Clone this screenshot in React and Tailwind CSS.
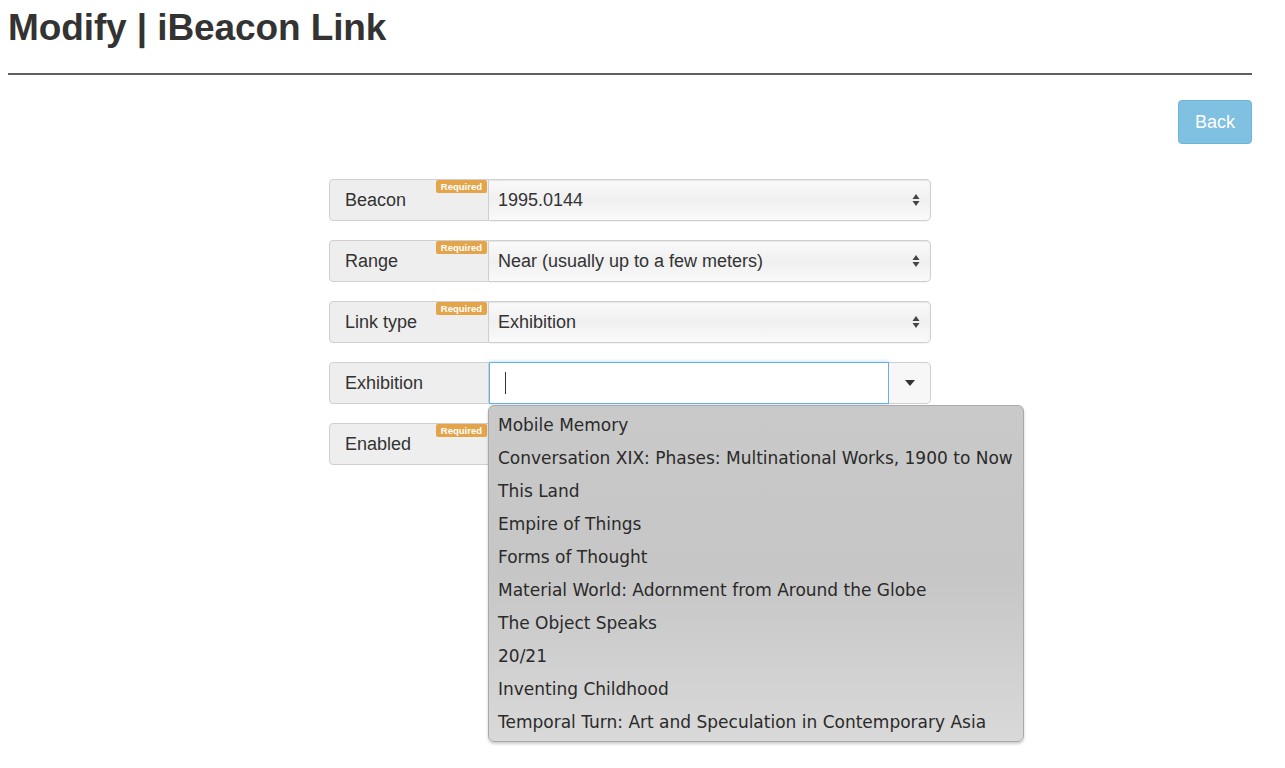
import React from "react";

const exhibitions = [
  "Mobile Memory",
  "Conversation XIX: Phases: Multinational Works, 1900 to Now",
  "This Land",
  "Empire of Things",
  "Forms of Thought",
  "Material World: Adornment from Around the Globe",
  "The Object Speaks",
  "20/21",
  "Inventing Childhood",
  "Temporal Turn: Art and Speculation in Contemporary Asia",
];

function Required() {
  return (
    <span className="absolute right-[1px] top-0 h-[13px] px-[5px] bg-[#e4a54a] text-white text-[9.5px] font-bold leading-[13px] rounded-[2px]">
      Required
    </span>
  );
}

function Label({ text, required }) {
  return (
    <div className="relative w-[160px] h-[42px] shrink-0 bg-[#eeeeee] border border-[#cfcfcf] rounded-l-[4px] flex items-center pl-[15px] text-[18px] text-[#333]">
      {text}
      {required && <Required />}
    </div>
  );
}

function SelectBox({ value }) {
  return (
    <div className="w-[442px] h-[42px] border border-[#cfcfcf] border-l-0 rounded-r-[5px] bg-gradient-to-b from-[#fafafa] via-[#f0f0f0] to-[#fafafa] shadow-[inset_0_1px_1px_rgba(0,0,0,0.08),0_1px_1px_rgba(0,0,0,0.05)] flex items-center pl-[9px] pr-[10px] text-[18px] text-[#333]">
      <span className="flex-1">{value}</span>
      <svg width="8" height="14" viewBox="0 0 8 14">
        <path d="M4 1 L7.5 6 L0.5 6 Z" fill="#444" />
        <path d="M4 13 L7.5 8 L0.5 8 Z" fill="#444" />
      </svg>
    </div>
  );
}

export default function App() {
  return (
    <div className="min-h-[768px] bg-white font-['Liberation_Sans',Arial,sans-serif] text-[#333]">
      <div className="px-[8px]">
        <h1 className="text-[37px] font-bold tracking-[-0.1px] text-[#333] pt-[6px] leading-[44px]">
          Modify | iBeacon Link
        </h1>
        <hr className="mt-[23px] border-0 border-t-[2px] border-[#5f5f5f] mr-[25px]" />
        <div className="flex justify-end mr-[25px] mt-[25px]">
          <button className="w-[74px] h-[44px] rounded-[4px] bg-[#80c0e0] border border-[#6eb3d8] text-white text-[18px]">
            Back
          </button>
        </div>
      </div>

      <div className="ml-[329px] mt-[35px] flex flex-col gap-[19px]">
        <div className="flex">
          <Label text="Beacon" required />
          <SelectBox value="1995.0144" />
        </div>
        <div className="flex">
          <Label text="Range" required />
          <SelectBox value="Near (usually up to a few meters)" />
        </div>
        <div className="flex">
          <Label text="Link type" required />
          <SelectBox value="Exhibition" />
        </div>
        <div className="relative flex">
          <Label text="Exhibition" />
          <div className="w-[400px] h-[42px] border border-[#66afe9] bg-white flex items-center pl-[15px] shadow-[0_0_4px_rgba(102,175,233,0.5)]">
            <span className="w-[1px] h-[22px] bg-[#333]" />
          </div>
          <div className="w-[42px] h-[42px] border border-[#cfcfcf] border-l-0 rounded-r-[5px] bg-[#f7f7f7] flex items-center justify-center">
            <svg width="10" height="6" viewBox="0 0 10 6">
              <path d="M0 0 L10 0 L5 6 Z" fill="#333" />
            </svg>
          </div>
          <div className="absolute left-[159px] top-[43px] w-[536px] h-[337px] z-10 rounded-[6px] border border-[#a9a9a9] bg-gradient-to-b from-[#c9c9c9] via-[#c6c6c6] to-[#d9d9d9] shadow-[0_2px_3px_rgba(0,0,0,0.2)] pt-[3px] pl-[9px] font-['DejaVu_Sans',Verdana,sans-serif] text-[17px] text-[#2a2a2a]">
            {exhibitions.map((e) => (
              <div key={e} className="h-[33px] leading-[33px] whitespace-nowrap">
                {e}
              </div>
            ))}
          </div>
        </div>
        <div className="flex">
          <Label text="Enabled" required />
        </div>
      </div>
    </div>
  );
}
